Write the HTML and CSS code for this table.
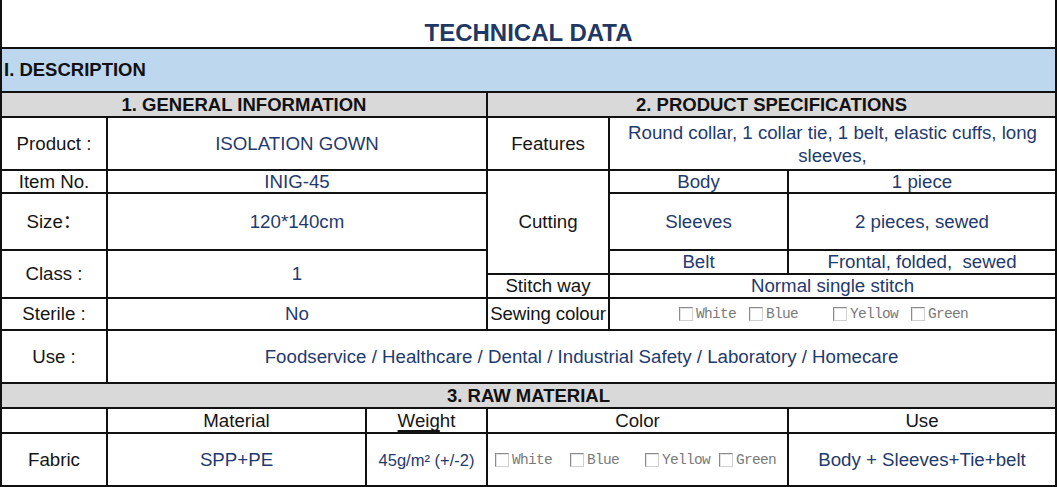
FILE: index.html
```html
<!DOCTYPE html>
<html lang="en">
<head>
<meta charset="utf-8">
<title>Technical Data</title>
<link rel="stylesheet" href="styles.css">
</head>
<body>
<div class="sheet">
  <div class="cell title span6">TECHNICAL DATA</div>
  <div class="cell band span6">I. DESCRIPTION</div>
  <div class="cell head span3">1. GENERAL INFORMATION</div>
  <div class="cell head span3">2. PRODUCT SPECIFICATIONS</div>

  <div class="cell label">Product :</div>
  <div class="cell value span2">ISOLATION GOWN</div>
  <div class="cell label">Features</div>
  <div class="cell value span2 wrap">Round collar, 1 collar tie, 1 belt, elastic cuffs, long sleeves,</div>

  <div class="cell label">Item No.</div>
  <div class="cell value span2">INIG-45</div>
  <div class="cell label rows3">Cutting</div>
  <div class="cell value">Body</div>
  <div class="cell value">1 piece</div>

  <div class="cell label">Size：</div>
  <div class="cell value span2">120*140cm</div>
  <div class="cell value">Sleeves</div>
  <div class="cell value">2 pieces, sewed</div>

  <div class="cell label rows2">Class :</div>
  <div class="cell value span2 rows2">1</div>
  <div class="cell value">Belt</div>
  <div class="cell value">Frontal, folded,&nbsp; sewed</div>

  <div class="cell label">Stitch way</div>
  <div class="cell value span2">Normal single stitch</div>

  <div class="cell label">Sterile :</div>
  <div class="cell value span2">No</div>
  <div class="cell label tight">Sewing colour</div>
  <div class="cell span2 checks sewing">
    <span class="cb">White</span>
    <span class="cb g13">Blue</span>
    <span class="cb g35">Yellow</span>
    <span class="cb g13">Green</span>
  </div>

  <div class="cell label">Use :</div>
  <div class="cell value span5">Foodservice / Healthcare / Dental / Industrial Safety / Laboratory / Homecare</div>

  <div class="cell head span6">3. RAW MATERIAL</div>

  <div class="cell"></div>
  <div class="cell label">Material</div>
  <div class="cell label"><span class="ul">Weig</span>ht</div>
  <div class="cell label span2">Color</div>
  <div class="cell label">Use</div>

  <div class="cell label">Fabric</div>
  <div class="cell value">SPP+PE</div>
  <div class="cell value small">45g/m² (+/-2)</div>
  <div class="cell span2 checks fabric">
    <span class="cb">White</span>
    <span class="cb g18">Blue</span>
    <span class="cb g26">Yellow</span>
    <span class="cb g9">Green</span>
  </div>
  <div class="cell value">Body + Sleeves+Tie+belt</div>
</div>
</body>
</html>
```

FILE: styles.css
```css
html, body {
  margin: 0;
  padding: 0;
  background: #fff;
}

body {
  font-family: "Liberation Sans", Arial, "Noto Sans CJK SC", sans-serif;
  font-size: 18.7px;
  color: #151515;
}

.sheet {
  display: grid;
  grid-template-columns: 104px 257px 119px 120px 177px 266px;
  grid-template-rows: 47px 42px 23px 51px 21px 55px 22px 22px 30px 51px 23px 23px 51px;
  gap: 2px;
  padding: 0 2px 2px;
  width: max-content;
  background: #111;
}

.cell {
  background: #fff;
  display: flex;
  align-items: center;
  justify-content: center;
  text-align: center;
  line-height: 22px;
  white-space: nowrap;
  overflow: visible;
}

.span2 { grid-column: span 2; }
.span3 { grid-column: span 3; }
.span5 { grid-column: span 5; }
.span6 { grid-column: span 6; }
.rows2 { grid-row: span 2; }
.rows3 { grid-row: span 3; }

.title {
  align-items: flex-end;
  padding-bottom: 2px;
  font-size: 24px;
  line-height: 1;
  font-weight: 700;
  color: #1f3864;
}

.band {
  background: #bdd7ee;
  justify-content: flex-start;
  padding-left: 2px;
  font-size: 18.5px;
  font-weight: 700;
  color: #111;
}

.head {
  background: #d9d9d9;
  font-size: 18.5px;
  font-weight: 700;
  color: #111;
}

.label {
  color: #151515;
}

.tight {
  letter-spacing: -0.15px;
}

.value {
  color: #1f3a6e;
}

.wrap {
  white-space: normal;
  line-height: 23px;
  padding: 0 6px;
}

.small {
  font-size: 16.5px;
}

.ul {
  text-decoration: underline;
  text-decoration-thickness: 2px;
  text-underline-offset: 3px;
  text-decoration-skip-ink: none;
  text-decoration-color: #111;
}

.checks {
  justify-content: flex-start;
}

.sewing {
  padding-left: 69px;
}

.fabric {
  padding-left: 7px;
}

.cb {
  display: inline-flex;
  align-items: center;
  gap: 3px;
  font-family: "Liberation Mono", "Courier New", monospace;
  font-size: 14.5px;
  letter-spacing: -0.7px;
  line-height: 16px;
  color: #7a7a7a;
}

.cb::before {
  content: "";
  width: 12px;
  height: 12px;
  border: 1px solid;
  border-color: #8a8a8a #d0d0d0 #d0d0d0 #8a8a8a;
  background: #fff;
  box-shadow: inset 1px 1px 0 #e4e4e4;
}

.g9 { margin-left: 9px; }
.g13 { margin-left: 13px; }
.g18 { margin-left: 18px; }
.g26 { margin-left: 26px; }
.g35 { margin-left: 35px; }
```
